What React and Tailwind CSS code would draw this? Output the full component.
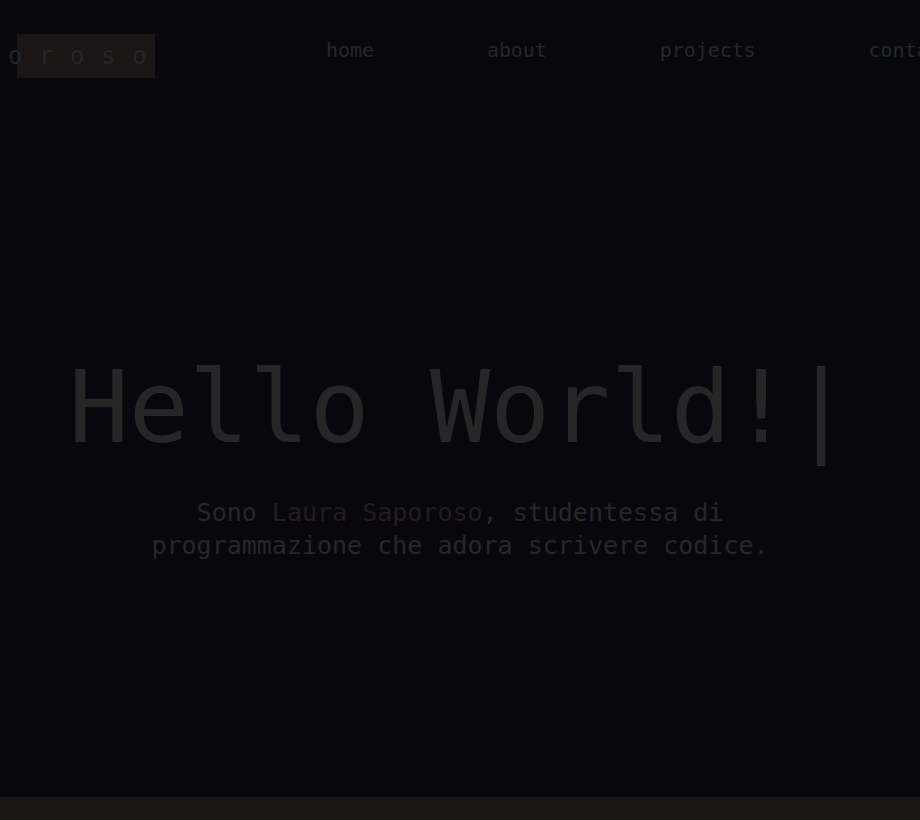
const mono = { fontFamily: '"DejaVu Sans Mono", "Liberation Mono", monospace' };

const links = ["home", "about", "projects", "contact"];

const App = () => {
  return (
    <div
      className="h-[820px] w-[920px] overflow-hidden bg-[#07070c] flex flex-col"
      style={mono}
    >
      <header className="h-[100px] flex items-start whitespace-nowrap">
        <div className="ml-[17px] mt-[34px] w-[138px] h-[44px] bg-[#1b1616] flex items-center overflow-visible">
          <span className="-ml-[9px] text-[24px] leading-none tracking-[16.6px] text-[#24262a]">
            oroso
          </span>
        </div>
        <nav className="ml-[171px] mt-[39px] flex gap-[113px] text-[19.9px] leading-[24px] text-[#26272a]">
          {links.map((link) => (
            <a key={link} href="#">
              {link}
            </a>
          ))}
        </nav>
      </header>

      <main className="flex-1 flex flex-col items-center pt-[258px]">
        <h1 className="text-[100px] leading-[100px] text-[#262626] whitespace-nowrap">
          Hello World!|
        </h1>
        <p className="mt-[38px] text-[25px] leading-[33px] text-[#27272a] text-center">
          Sono <span className="text-[#251c1c]">Laura Saporoso</span>, studentessa di
          <br />
          programmazione che adora scrivere codice.
        </p>
      </main>

      <footer className="h-[23px] bg-[#1b1516]" />
    </div>
  );
};

export default App;
